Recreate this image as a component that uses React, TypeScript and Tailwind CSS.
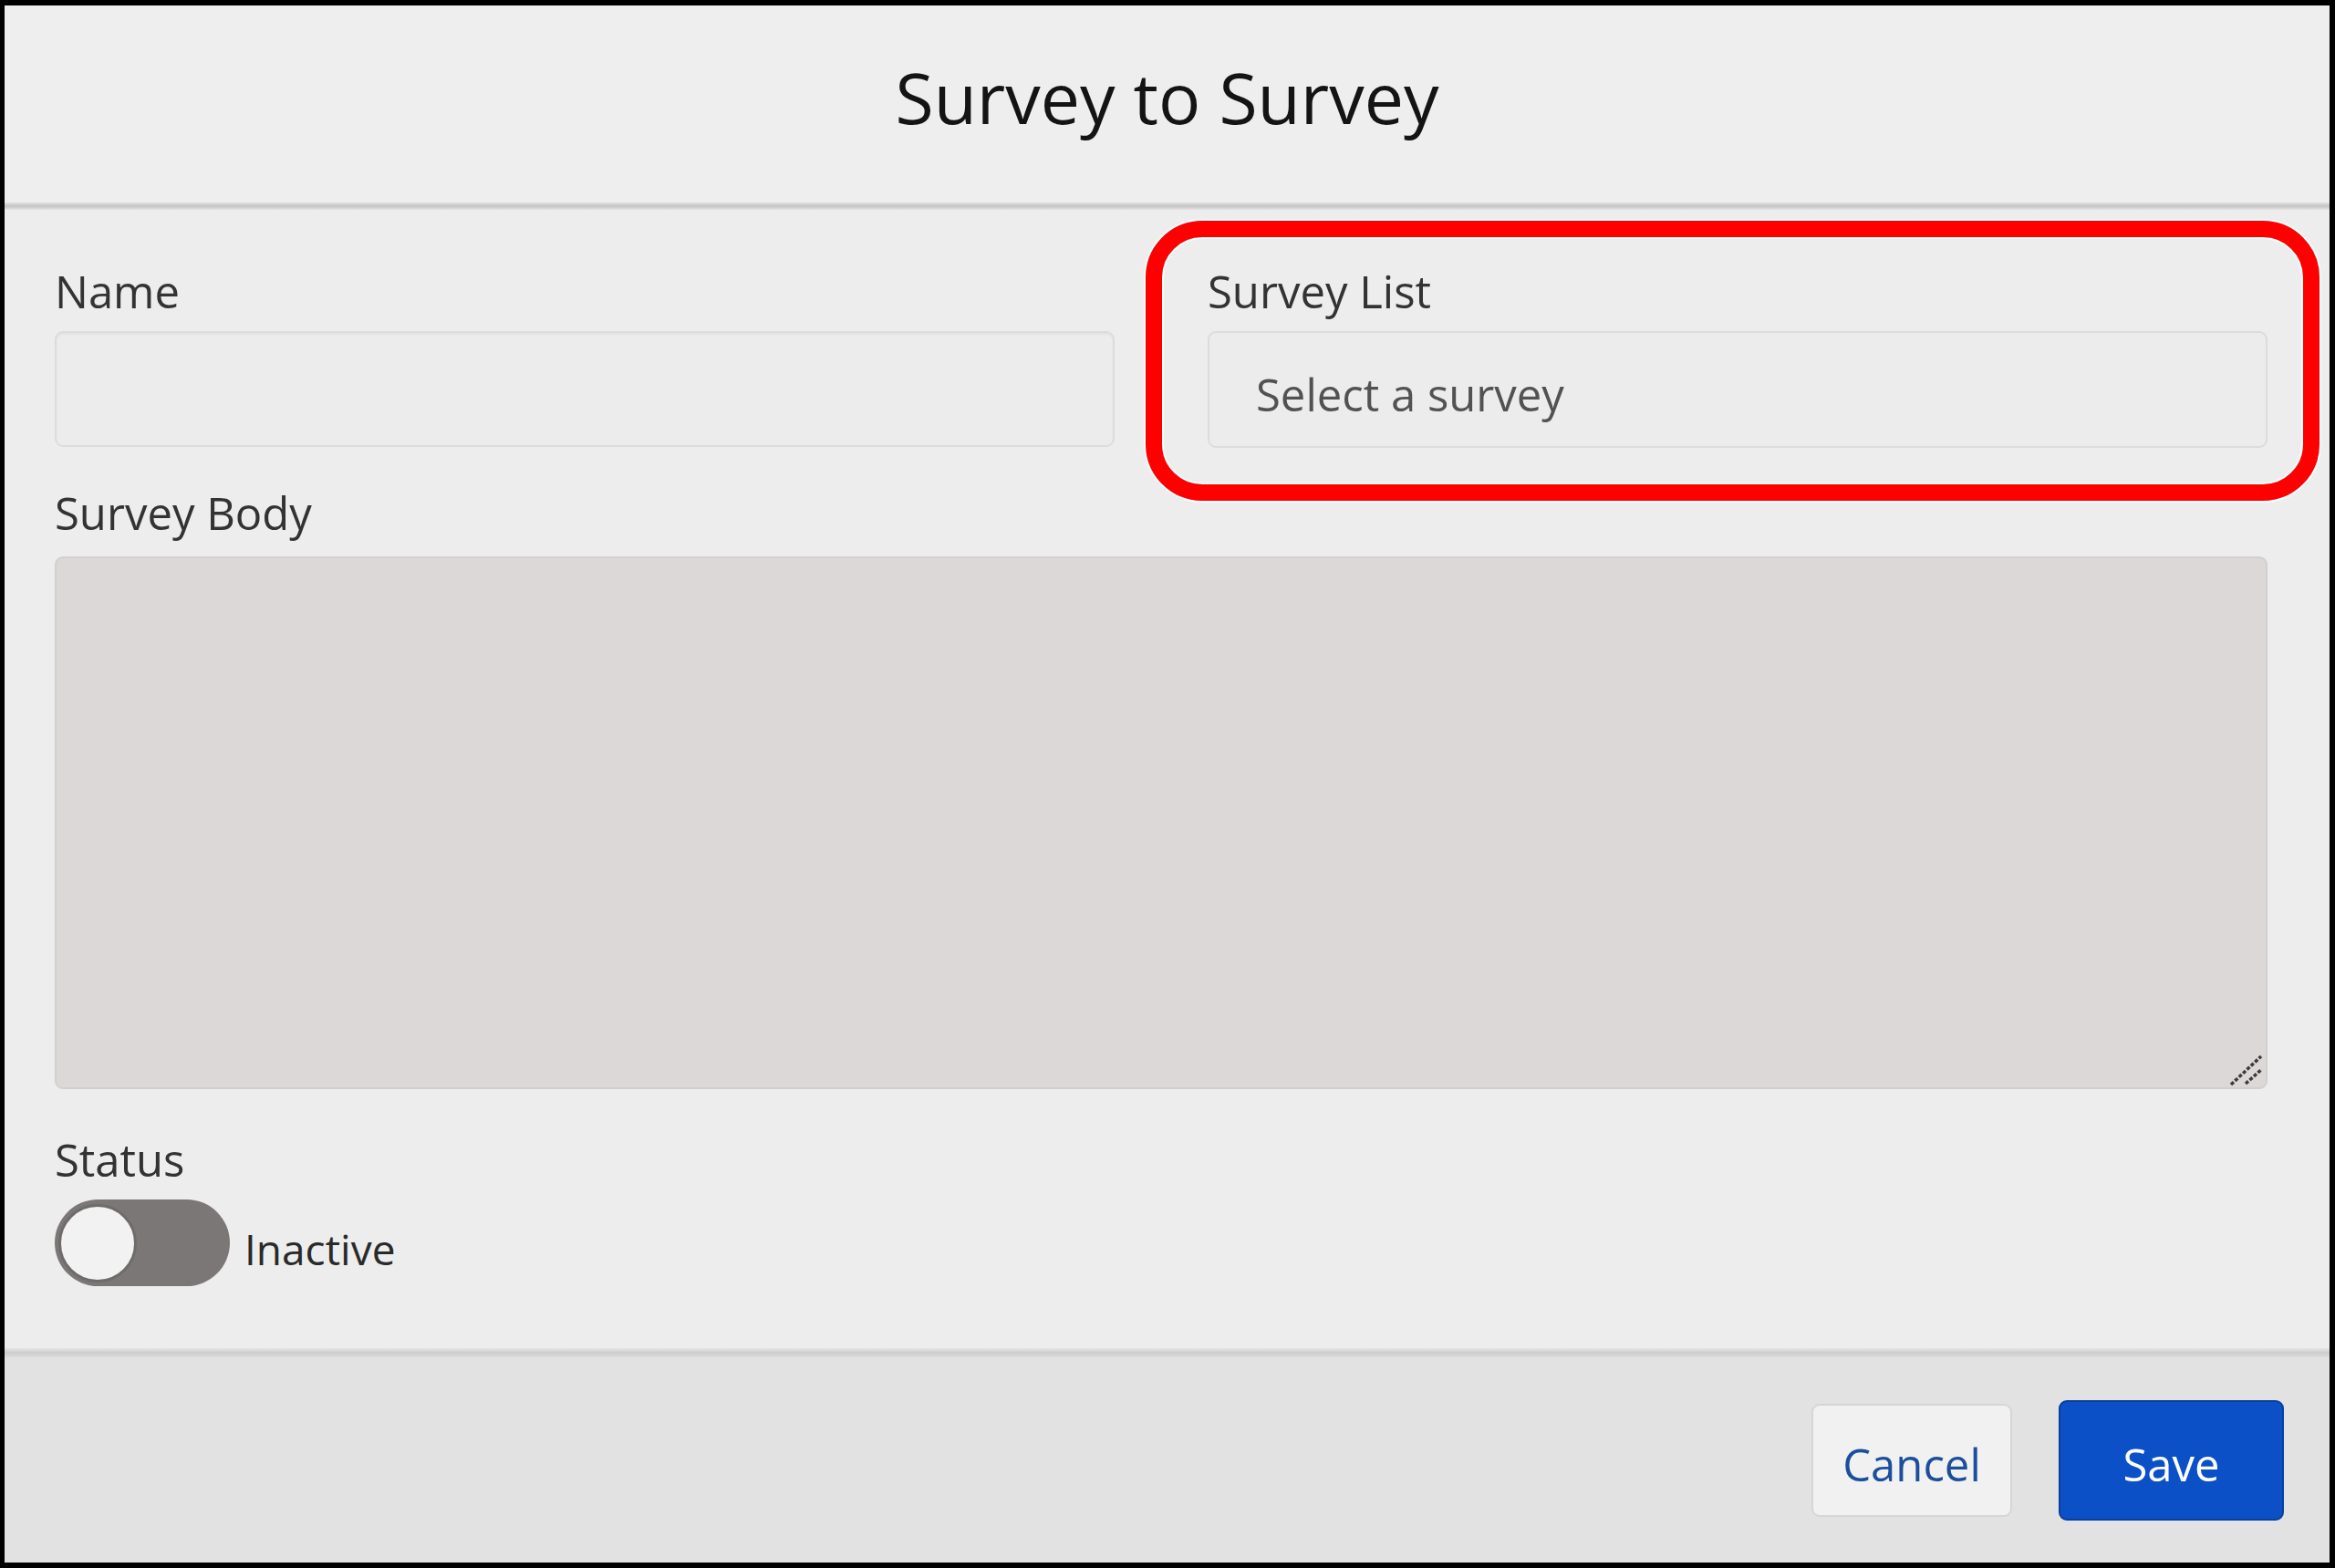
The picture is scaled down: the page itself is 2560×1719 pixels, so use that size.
import React from "react";

const font = { fontFamily: '"Open Sans", "Noto Sans", sans-serif' };

function Label({ children, className = "" }: { children: React.ReactNode; className?: string }) {
  return (
    <div className={"h-[67px] text-[49px] leading-[67px] text-[#333333] " + className}>{children}</div>
  );
}

function Toggle({ on, label }: { on: boolean; label: string }) {
  return (
    <div className="flex items-end gap-[16px]">
      <div className={"flex h-[95px] w-[192px] items-center rounded-full px-[4px] " + (on ? "justify-end bg-[#0b50c6]" : "bg-[#7b7777]")}>
        <div className="size-[86px] rounded-full border-[3px] border-[#6f6b6b] bg-[#f2f2f2]" />
      </div>
      <span className="pb-[9px] text-[46px] leading-[63px] text-[#2a2a2a]">{label}</span>
    </div>
  );
}

export default function App() {
  return (
    <div className="h-[1719px] w-[2560px] bg-black pb-[6px] pl-[5px] pr-[6px] pt-[6px]" style={font}>
      <div className="flex h-full flex-col bg-[#ededed]">
        {/* header */}
        <div className="h-[216px] shrink-0 bg-[#eeeeee] pt-[48px] text-center">
          <h1 className="text-[77px] leading-[105px] text-[#141414]">Survey to Survey</h1>
        </div>
        <div className="h-[8px] shrink-0 bg-linear-to-b from-[#e3e3e3] via-[#c4c4c4] to-[#e4e4e4]" />

        {/* form */}
        <div className="flex-1 pl-[55px] pr-[68px] pt-[56px]">
          <div className="grid grid-cols-2 gap-x-[102px]">
            <div>
              <Label className="mb-[10px]">Name</Label>
              <div className="h-[127px] rounded-[9px] border-2 border-[#dcdcdc] bg-[#ececec] shadow-[inset_0_2px_2px_rgba(0,0,0,0.04)]" />
            </div>
            <div className="relative">
              <Label className="mb-[10px]">Survey List</Label>
              <div className="flex h-[128px] items-center rounded-[9px] border-2 border-[#dcdcdc] bg-[#ececec] pl-[51px] pt-[10px]">
                <span className="text-[49px] leading-[67px] text-[#525252]">Select a survey</span>
              </div>
              {/* highlight ring */}
              <div className="pointer-events-none absolute -bottom-[58px] -left-[68px] -right-[57px] -top-[44px] rounded-[62px] border-[18px] border-[#ff0000] shadow-[0_0_0_2px_#f2ffff,inset_0_0_0_2px_#f2ffff]" />
            </div>
          </div>

          <Label className="mb-[14px] mt-[38px]">Survey Body</Label>
          <div className="relative h-[584px] rounded-[9px] border-2 border-[#d2cfcf] bg-[#dcd8d8]">
            <svg className="absolute bottom-[1px] right-[2px]" width="40" height="36" viewBox="0 0 40 36">
              <line x1="4" y1="34" x2="37" y2="3" stroke="#3c3c3c" strokeWidth="3.5" strokeDasharray="4 2" />
              <line x1="20" y1="33" x2="38" y2="17" stroke="#3c3c3c" strokeWidth="3.5" strokeDasharray="4 2" />
            </svg>
          </div>

          <Label className="mb-[10px] mt-[44px]">Status</Label>
          <Toggle on={false} label="Inactive" />
        </div>

        {/* footer */}
        <div className="h-[10px] shrink-0 bg-linear-to-b from-[#e6e6e6] via-[#cdcdcd] to-[#dcdcdc]" />
        <div className="flex h-[225px] shrink-0 items-center justify-end gap-[51px] bg-[#e2e2e2] pr-[50px]">
          <button className="h-[124px] w-[220px] rounded-[9px] border-2 border-[#d6d6d6] bg-[#f1f1f1] pt-[10px] text-[49px] text-[#1b4f9c]">
            Cancel
          </button>
          <button className="h-[132px] w-[247px] rounded-[9px] border-2 border-[#0a3f9e] bg-[#0b50c6] pt-[10px] text-[49px] text-white">
            Save
          </button>
        </div>
      </div>
    </div>
  );
}
